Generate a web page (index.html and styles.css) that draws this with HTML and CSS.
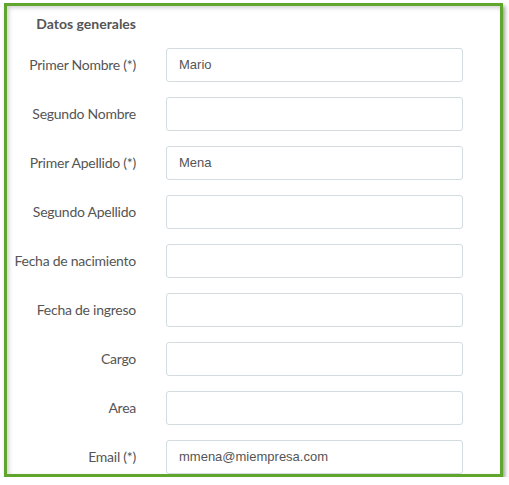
FILE: index.html
```html
<!DOCTYPE html>
<html lang="es">
<head>
<meta charset="utf-8">
<title>Datos generales</title>
<link rel="stylesheet" href="styles.css">
</head>
<body>
<div class="panel">
  <div class="form">
    <div class="heading">Datos generales</div>
    <div></div>
    <label class="label">Primer Nombre (*)</label>
    <div class="input">Mario</div>
    <label class="label">Segundo Nombre</label>
    <div class="input"></div>
    <label class="label">Primer Apellido (*)</label>
    <div class="input">Mena</div>
    <label class="label">Segundo Apellido</label>
    <div class="input"></div>
    <label class="label">Fecha de nacimiento</label>
    <div class="input"></div>
    <label class="label">Fecha de ingreso</label>
    <div class="input"></div>
    <label class="label">Cargo</label>
    <div class="input"></div>
    <label class="label">Area</label>
    <div class="input"></div>
    <label class="label">Email (*)</label>
    <div class="input">mmena@miempresa.com</div>
  </div>
</div>
</body>
</html>
```
FILE: styles.css
```css
html, body {
  margin: 0;
  padding: 0;
  background: #ffffff;
}
.panel {
  box-sizing: border-box;
  margin: 3px 0 0 4px;
  width: 499px;
  height: 474px;
  border: 3px solid #5fa52e;
  overflow: hidden;
  background: #ffffff;
  box-shadow: 2px 3px 4px rgba(0, 0, 0, 0.4), inset 2px 2px 4px rgba(0, 0, 0, 0.18);
}
.form {
  display: grid;
  grid-template-columns: 129px 297px;
  column-gap: 30px;
  row-gap: 15px;
  padding-top: 8px;
  font-family: "Lato", "Liberation Sans", sans-serif;
  color: #555555;
}
.heading {
  font-weight: bold;
  font-size: 14px;
  line-height: 20px;
  text-align: right;
  color: #555555;
  margin-bottom: -1px;
}
.label {
  font-size: 14px;
  letter-spacing: -0.25px;
  line-height: 34px;
  height: 34px;
  text-align: right;
  white-space: nowrap;
}
.input {
  box-sizing: border-box;
  height: 34px;
  border: 1px solid #d2dcdf;
  border-radius: 3px;
  padding: 0 12px;
  font-family: "Liberation Sans", Arial, sans-serif;
  font-size: 13px;
  line-height: 32px;
  color: #555555;
}
```
